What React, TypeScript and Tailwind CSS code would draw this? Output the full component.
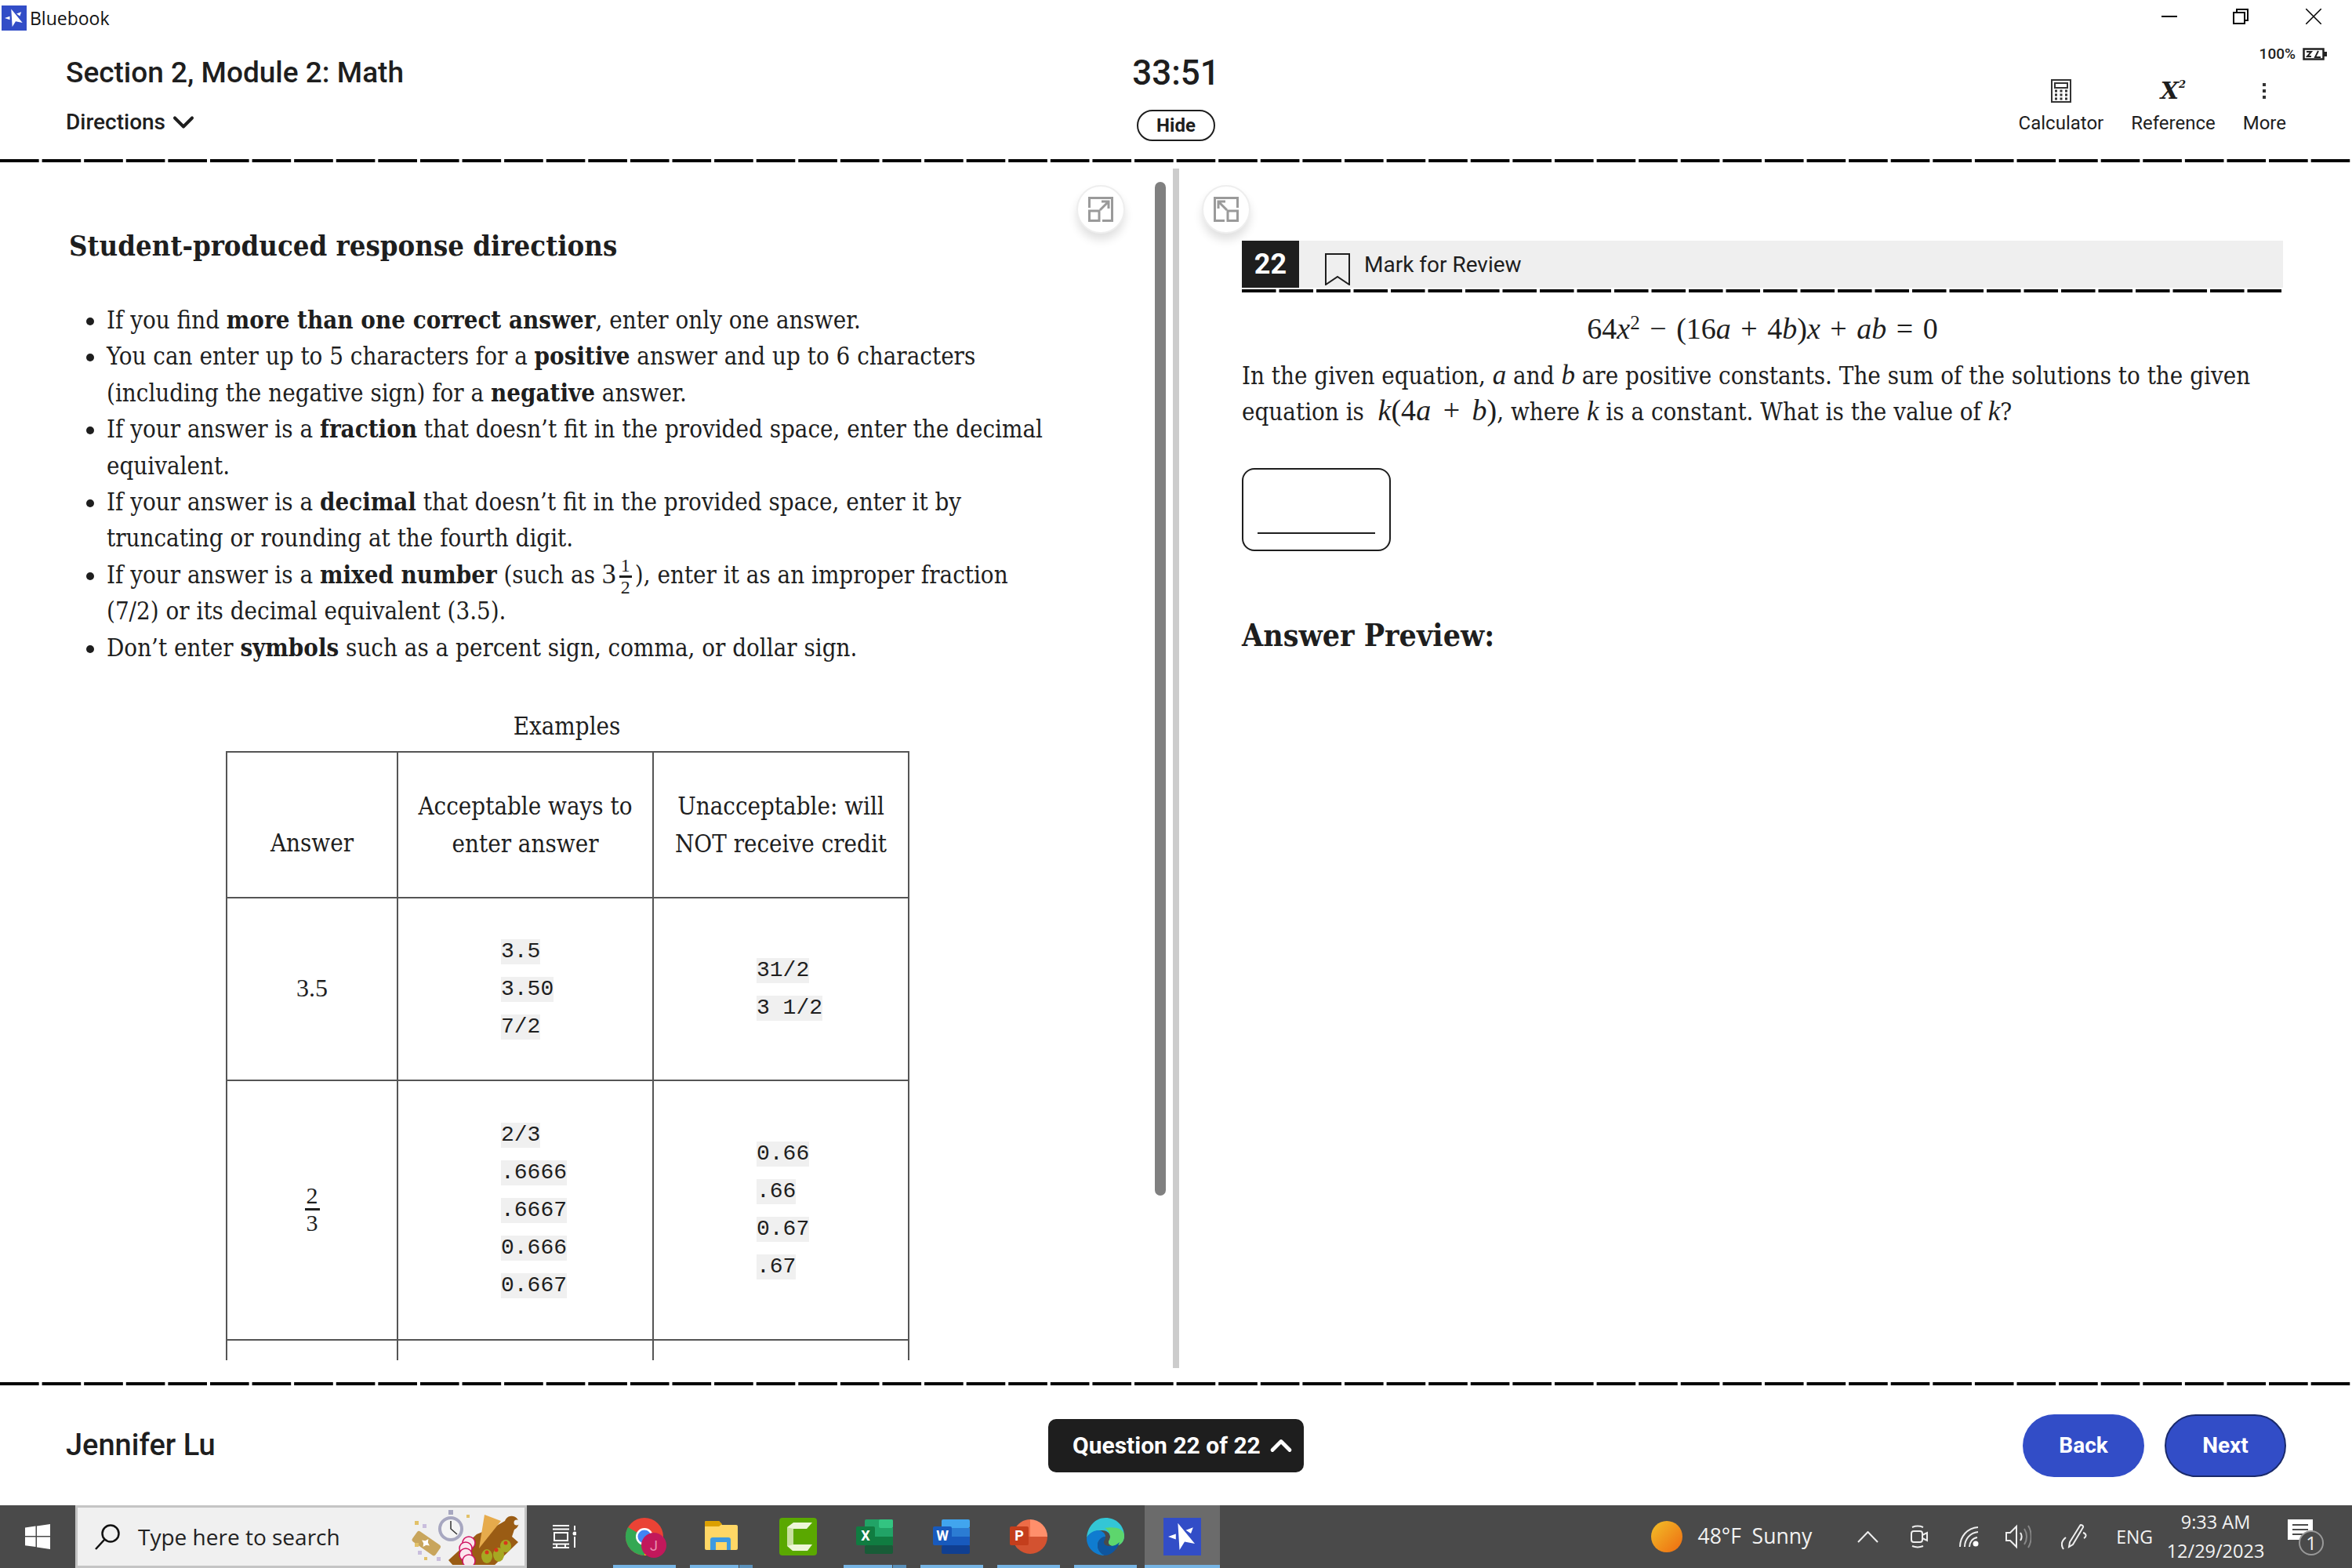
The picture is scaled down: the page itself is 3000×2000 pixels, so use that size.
import { ReactNode } from 'react';
import { ChevronDown, ChevronUp } from 'lucide-react';

const SERIF = "font-['DejaVu_Serif',serif] [font-stretch:condensed]";
const ROBOTO = "font-['Roboto',sans-serif]";
const MATH = "font-['Liberation_Serif',serif]";

// Dashed rule used across the exam layout
function Dashes() {
  return <div className="h-1 w-full shrink-0 bg-[linear-gradient(90deg,#000_50px,transparent_50px)] bg-size-[53.6px_4px]" />;
}

function I({ children }: { children: ReactNode }) {
  return <span className={`${MATH} text-[35px] leading-none italic`}>{children}</span>;
}

function Frac({ top, bottom, size }: { top: string; bottom: string; size: string }) {
  return (
    <span className={`${MATH} ${size} -my-4 mx-1 inline-flex flex-col items-center align-middle leading-none`}>
      <span className="border-b-[3px] border-[#1e1e1e] px-0.5 leading-[1.05]">{top}</span>
      <span className="px-0.5 leading-[1.05]">{bottom}</span>
    </span>
  );
}

function Chip({ children }: { children: string }) {
  return (
    <div className="flex h-12 items-center">
      <code className="bg-[#f0f0f0] font-['Liberation_Mono',monospace] text-[28px] leading-8 whitespace-pre text-[#1e1e1e]">{children}</code>
    </div>
  );
}

function Bluebook({ size }: { size: number }) {
  return (
    <svg width={size} height={size} viewBox="0 0 48 48">
      <rect width="48" height="48" fill="#324dc7" />
      <path d="M18.4 6.7 40 33l-13-2.6L20.5 41Z M6 24l9.8-3.4v6.8Z M37.8 12.3 28.6 15.7l6.4 4.4Z" fill="#fff" />
    </svg>
  );
}

function CutIcon({ flip }: { flip?: boolean }) {
  return (
    <svg width="32" height="32" viewBox="0 0 32 32" fill="none" stroke="#9a9a9a" strokeWidth="3">
      {flip ? (
        <>
          <path d="M14 30.500H1.500V1.500H30.500V14" />
          <rect x="18" y="18" width="12.500" height="12.500" />
          <path d="M17 17 6.500 6.500M6 15V6h9" />
        </>
      ) : (
        <>
          <path d="M1.500 14V1.500H30.500V30.500H18" />
          <rect x="1.500" y="18" width="12.500" height="12.500" />
          <path d="M15 17 25.500 6.500M17 6h9v9" />
        </>
      )}
    </svg>
  );
}

function Doodle() {
  return (
    <svg width="152" height="72" viewBox="-4 0 152 72" className="shrink-0">
      <path d="M87 33l22-9 14-8a9 9 0 1 1 12 11l-3 9 8 7-32 31H58l-7-8Z" fill="#9a5c14" />
      <circle cx="138" cy="18" r="3.500" fill="#f0f0f0" />
      <path d="M97 8l21 8-28 35Z" fill="#e6ab4c" />
      <circle cx="54" cy="26" r="16" fill="#a7a7c0" />
      <circle cx="54" cy="26" r="12" fill="#f4f4f4" />
      <path d="M54 16v10l8 7" stroke="#333" strokeWidth="1.500" fill="none" />
      <rect x="51" y="2" width="6" height="6" fill="#a7a7c0" />
      <g transform="rotate(35 22 44)">
        <rect x="5" y="36" width="36" height="16" rx="3" fill="#c8a55c" />
        <path d="M22 38l2 4 4 2-4 2-2 4-2-4-4-2 4-2Z" fill="#fff" />
      </g>
      <g fill="#fbe6ee" stroke="#cf1160" strokeWidth="1.500">
        <circle cx="77" cy="44" r="8" />
        <circle cx="73" cy="51" r="8" />
        <circle cx="73" cy="59" r="8" />
        <circle cx="77" cy="67" r="8" />
      </g>
      <g fill="#a6a822">
        <ellipse cx="100" cy="61" rx="7" ry="9" />
        <ellipse cx="115" cy="59" rx="7" ry="9" />
        <ellipse cx="124" cy="48" rx="7" ry="8" />
      </g>
      <g fill="#d8361c">
        <circle cx="100" cy="56" r="2.500" />
        <circle cx="112" cy="53" r="2.500" />
        <circle cx="124" cy="44" r="2.500" />
      </g>
      <g fill="#e2c168">
        <rect x="8" y="16" width="5" height="5" />
        <rect x="8" y="44" width="5" height="5" />
        <rect x="20" y="62" width="4" height="4" />
        <rect x="74" y="8" width="4" height="4" />
      </g>
      <g fill="#c9bedd">
        <rect x="18" y="20" width="5" height="5" />
        <rect x="12" y="54" width="5" height="5" />
        <rect x="36" y="62" width="5" height="5" />
      </g>
    </svg>
  );
}

function AppIcon({ name }: { name: string }) {
  if (name === 'chrome')
    return (
      <svg width="62" height="56" viewBox="0 0 62 56">
        <circle cx="31" cy="28" r="24" fill="#ea4335" />
        <path d="M31 28 10 16A24 24 0 0 0 31 52Z" fill="#34a853" />
        <path d="M31 28h24a24 24 0 0 1-24 24Z" fill="#fbbc05" />
        <circle cx="31" cy="28" r="11" fill="#fff" />
        <circle cx="31" cy="28" r="8.500" fill="#4285f4" />
        <circle cx="43" cy="39" r="16" fill="#c2185b" />
        <text x="43" y="46" textAnchor="middle" fontSize="18" fill="#e98fb0" fontFamily="Roboto">J</text>
      </svg>
    );
  if (name === 'folder')
    return (
      <svg width="42" height="48" viewBox="0 0 42 48">
        <path d="M0 6a2 2 0 0 1 2-2h16l4 5h18a2 2 0 0 1 2 2v28a2 2 0 0 1-2 2H2a2 2 0 0 1-2-2Z" fill="#ffd766" />
        <path d="M0 6a2 2 0 0 1 2-2h16l4 4-4 3H0Z" fill="#dca000" />
        <path d="M7 41V28a3 3 0 0 1 3-3h20a3 3 0 0 1 3 3v13h-7V31H14v10Z" fill="#3e9ae0" />
        <rect x="14" y="31" width="14" height="10" fill="#ffd766" />
      </svg>
    );
  if (name === 'camtasia')
    return (
      <svg width="48" height="48" viewBox="0 0 48 48">
        <rect width="48" height="48" rx="4" fill="#5aa800" />
        <path d="M10 12 18 6h24l-7 8H18v20h24l-6 8H17l-7-6Z" fill="#eef6d8" />
        <path d="M10 12l8 2v20l-8 2Z" fill="#c9e0a0" />
      </svg>
    );
  if (name === 'excel' || name === 'word')
    return (
      <svg width="48" height="44" viewBox="0 0 48 44">
        {name === 'excel' ? (
          <>
            <rect x="11" y="0" width="36" height="11" rx="2" fill="#21a366" />
            <rect x="29" y="0" width="18" height="11" rx="2" fill="#33c481" />
            <rect x="11" y="11" width="18" height="11" fill="#21a366" />
            <rect x="29" y="11" width="18" height="11" fill="#21a366" />
            <rect x="11" y="22" width="36" height="11" fill="#107c41" />
            <rect x="11" y="33" width="36" height="11" rx="2" fill="#185c37" />
          </>
        ) : (
          <>
            <rect x="11" y="0" width="36" height="11" rx="2" fill="#41a5ee" />
            <rect x="11" y="11" width="36" height="11" fill="#2b7cd3" />
            <rect x="11" y="22" width="36" height="11" fill="#185abd" />
            <rect x="11" y="33" width="36" height="11" rx="2" fill="#103f91" />
          </>
        )}
        <rect x="0" y="9" width="24" height="24" rx="2" fill={name === 'excel' ? '#107c41' : '#185abd'} />
        <text x="12" y="27" textAnchor="middle" fontSize="18" fontWeight="700" fill="#fff" fontFamily="Roboto">
          {name === 'excel' ? 'X' : 'W'}
        </text>
      </svg>
    );
  if (name === 'ppt')
    return (
      <svg width="48" height="44" viewBox="0 0 48 44">
        <path d="M26 0a22 22 0 0 1 22 22H26Z" fill="#ff8f6b" />
        <path d="M26 0a22 22 0 0 0-16 37l16-15Z" fill="#ed6c47" />
        <path d="M4 22h44a22 22 0 0 1-44 0Z" fill="#d35230" />
        <rect x="0" y="9" width="24" height="24" rx="2" fill="#c43e1c" />
        <text x="12" y="27" textAnchor="middle" fontSize="18" fontWeight="700" fill="#fff" fontFamily="Roboto">P</text>
      </svg>
    );
  return (
    <svg width="48" height="48" viewBox="0 0 48 48">
      <path d="M24 0c14 0 24 10 24 23 0 8-6 13-12 13-5 0-8-2-8-5 0-2 2-3 2-7 0-5-5-8-10-8C10 16 2 20 0 26 1 11 11 0 24 0Z" fill="#33c6d6" />
      <path d="M48 23c0 8-6 13-12 13-5 0-8-2-8-5 0-2 2-3 2-7 0-5-3-9-7-11 12-2 25 0 25 10Z" fill="#5dd66d" />
      <path d="M0 26c2-6 10-10 14-10 5 0 10 3 10 8-5 0-10 5-10 11 0 6 4 11 9 13C10 48 0 38 0 26Z" fill="#0f7cd0" />
      <path d="M14 35c0-6 5-11 10-11 0 4-2 5-2 7 0 3 3 5 8 5 5 0 9-2 12-5-3 10-11 17-19 17-5-2-9-7-9-13Z" fill="#0f569f" />
    </svg>
  );
}

const taskApps = [
  { name: 'chrome', bar: 'single' },
  { name: 'folder', bar: 'stack' },
  { name: 'camtasia', bar: 'none' },
  { name: 'excel', bar: 'stack' },
  { name: 'word', bar: 'single' },
  { name: 'ppt', bar: 'single' },
  { name: 'edge', bar: 'single' },
];

function Taskbar() {
  return (
    <div className="flex h-20 w-full shrink-0 items-stretch bg-[#4a4a4a] font-['Open_Sans',sans-serif] text-[#f2f2f2]">
      <div className="flex w-24 items-center justify-center">
        <svg width="32" height="32" viewBox="0 0 32 32" fill="#fff">
          <path d="M0 4.500 13.500 2.600V15H0ZM15 2.400 32 0V15H15ZM0 16.500H13.500V29L0 27.200ZM15 16.500H32V32L15 29.500Z" />
        </svg>
      </div>
      <div className="flex w-[576px] items-center overflow-hidden border-[3px] border-[#c4c4c4] bg-[#f0f0f0] pl-[21px] text-[#222]">
        <svg width="34" height="34" viewBox="0 0 34 34" fill="none" stroke="#111" strokeWidth="2.500">
          <circle cx="21" cy="13" r="10.500" />
          <path d="M13.500 20.500 2 33" />
        </svg>
        <span className="ml-[22px] text-[28px] leading-none">Type here to search</span>
        <div className="ml-auto flex items-center">
          <Doodle />
        </div>
      </div>
      <div className="flex w-[110px] items-center justify-start pl-8">
        <svg width="31" height="30" viewBox="0 0 31 30" fill="none" stroke="#fff" strokeWidth="2">
          <path d="M1 1h21M1 5.500h21M3 10h17v10H3ZM1 24.500h21M1 29h21M6 24.500V29M17 24.500V29M29 1v6M29 15v14" />
          <circle cx="29" cy="11" r="2.500" fill="#fff" stroke="none" />
        </svg>
      </div>
      <div className="flex gap-[18px]">
        {taskApps.map((app) => (
          <div key={app.name} className="relative flex w-20 items-center justify-center">
            <AppIcon name={app.name} />
            {app.bar !== 'none' && (
              <div className="absolute inset-x-0 bottom-0 flex h-1">
                <div className="flex-1 bg-[#76b4e4]" />
                {app.bar === 'stack' && <div className="ml-px w-[17px] bg-[#5a90ba]" />}
              </div>
            )}
          </div>
        ))}
        <div className="relative -mx-2 flex w-24 items-center justify-center bg-[#6b6b6b]">
          <Bluebook size={48} />
          <div className="absolute inset-x-0 bottom-0 h-1 bg-[#76b4e4]" />
        </div>
      </div>
      <div className="ml-auto flex items-center">
        <div className="h-10 w-10 rounded-full bg-[linear-gradient(135deg,#f2c029,#ee6a10)]" />
        <span className="ml-5 text-[26.5px] whitespace-pre">48°F  Sunny</span>
        <svg width="27" height="15" viewBox="0 0 27 15" fill="none" stroke="#eee" strokeWidth="2" className="ml-[58px]">
          <path d="M1 14 13.500 1 26 14" />
        </svg>
        <svg width="23" height="30" viewBox="0 0 23 30" fill="none" stroke="#eee" strokeWidth="2" className="ml-10">
          <path d="M3 3c5-2 9-2 14 0M3 27c5 2 9 2 14 0" />
          <rect x="2" y="8" width="14" height="14" rx="3" />
          <path d="M16 13l6-3v10l-6-3" />
        </svg>
        <svg width="25" height="26" viewBox="0 0 25 26" fill="none" stroke="#eee" strokeWidth="2" className="ml-10">
          <path d="M1 26C1 13 10 2 24 1M7 26C7 16 14 8 24 7M13 26c0-6 4-11 10-12" />
          <circle cx="21" cy="22" r="3.500" fill="#fff" stroke="none" />
        </svg>
        <svg width="33" height="32" viewBox="0 0 33 32" fill="none" stroke="#eee" strokeWidth="2" className="ml-[34px]">
          <path d="M1 11h5l8-8v26l-8-8H1Z" />
          <path d="M19 11c2 3 2 7 0 10" />
          <path d="M24 6c4 6 4 14 0 20M29 2c5 8 5 20 0 28" stroke="#888" />
        </svg>
        <svg width="33" height="34" viewBox="0 0 33 34" fill="none" stroke="#eee" strokeWidth="2" className="ml-[38px]">
          <path d="M11 24 24 3c1-2 5 0 4 2L15 27l-5 3Z" />
          <path d="M28 12c4 1 5 5 1 7M6 18c-5 4-7 9-3 15" />
        </svg>
        <span className="ml-[37px] text-[23px]">ENG</span>
        <div className="ml-[20px] flex w-[120px] flex-col items-center text-[23.5px] leading-[37px]">
          <span>9:33 AM</span>
          <span>12/29/2023</span>
        </div>
        <div className="relative ml-[32px] mr-[50px] h-[44px] w-[32px]">
          <svg width="32" height="26" viewBox="0 0 32 26" fill="#fff" className="absolute top-0 left-0">
            <path d="M0 0h32v26H0Z" />
            <path d="M6 7h20M6 13h20M6 19h14" stroke="#4a4a4a" strokeWidth="2" />
          </svg>
          <div className="absolute top-[14px] left-[14px] flex h-8 w-8 items-center justify-center rounded-full border-2 border-[#999] bg-[#4a4a4a] text-[24px] leading-none">1</div>
        </div>
      </div>
    </div>
  );
}

function Header() {
  return (
    <div className={`${ROBOTO} grid h-[157px] shrink-0 grid-cols-3 text-[#1e1e1e]`}>
      <div className="pt-6 pl-[84px]">
        <div className="text-[37px] leading-[46px] font-medium">Section 2, Module 2: Math</div>
        <div className="mt-[22px] flex h-9 items-center text-[28px] font-medium">
          Directions
          <ChevronDown size={44} strokeWidth={2.2} className="-my-2 ml-px" />
        </div>
      </div>
      <div className="flex flex-col items-center pt-6">
        <div className="text-[44px] leading-[46px] font-medium">33:51</div>
        <div className="mt-6 flex h-10 w-[100px] items-center justify-center rounded-full border-2 border-[#1e1e1e] text-[24px] font-bold">Hide</div>
      </div>
      <div className="flex flex-col items-end pr-8">
        <div className="mt-[11px] flex h-6 items-center gap-[9px] text-[19px] font-medium">
          100%
          <svg width="31" height="16" viewBox="0 0 31 16" fill="none" stroke="#222" strokeWidth="2.500">
            <rect x="1.500" y="1.500" width="25" height="13" />
            <path d="M27 5h4v6h-4Z" fill="#222" stroke="none" />
            <path d="M5 5h6l-5 6h5M20 4l-4 8h7" strokeWidth="2" />
          </svg>
        </div>
        <div className="mt-[20px] mr-[52px] flex gap-[35px] text-[24px]">
          <div className="flex flex-col items-center">
            <svg width="26" height="30" viewBox="0 0 26 30" fill="none" stroke="#333" strokeWidth="2">
              <rect x="1" y="1" width="24" height="28" />
              <rect x="5" y="5" width="16" height="6" />
              <path d="M5 15h3M11.500 15h3M18 15h3M5 20h3M11.500 20h3M18 20h3M5 25h3M11.500 25h3M18 25h3" strokeWidth="3" />
            </svg>
            <span className="mt-3 leading-7">Calculator</span>
          </div>
          <div className="flex flex-col items-center">
            <div className="flex h-[30px] items-start font-['DejaVu_Serif',serif] text-[30px] leading-[30px] font-bold italic">
              X<span className="text-[13px] leading-[14px]">2</span>
            </div>
            <span className="mt-3 leading-7">Reference</span>
          </div>
          <div className="flex flex-col items-center">
            <div className="flex h-[30px] flex-col items-center justify-center gap-1">
              <div className="h-1 w-1 bg-[#333]" />
              <div className="h-1 w-1 bg-[#333]" />
              <div className="h-1 w-1 bg-[#333]" />
            </div>
            <span className="mt-3 leading-7">More</span>
          </div>
        </div>
      </div>
    </div>
  );
}

function DirectionsPanel() {
  return (
    <div className={`${SERIF} relative h-[1528px] w-[1473px] shrink-0 overflow-hidden pt-[82px] pl-[88px] text-[#1e1e1e]`}>
      <div className="absolute top-[29px] left-[1373px] flex h-[62px] w-[62px] items-center justify-center rounded-full border-2 border-[#eee] bg-white shadow-[0_8px_12px_rgba(0,0,0,0.12)]">
        <CutIcon />
      </div>
      <h2 className="text-[36.2px] leading-[50px] font-bold whitespace-nowrap">Student-produced response directions</h2>
      <ul className="mt-[46px] list-disc pl-[48px] text-[31px] leading-[46.4px] whitespace-nowrap">
        <li>If you find <b>more than one correct answer</b>, enter only one answer.</li>
        <li>You can enter up to 5 characters for a <b>positive</b> answer and up to 6 characters<br />(including the negative sign) for a <b>negative</b> answer.</li>
        <li>If your answer is a <b>fraction</b> that doesn’t fit in the provided space, enter the decimal<br />equivalent.</li>
        <li>If your answer is a <b>decimal</b> that doesn’t fit in the provided space, enter it by<br />truncating or rounding at the fourth digit.</li>
        <li>
          If your answer is a <b>mixed number</b> (such as <span className={`${MATH} text-[36px] leading-none`}>3</span>
          <Frac top="1" bottom="2" size="text-[24px]" />), enter it as an improper fraction<br />(7/2) or its decimal equivalent (3.5).
        </li>
        <li>Don’t enter <b>symbols</b> such as a percent sign, comma, or dollar sign.</li>
      </ul>
      <div className="mt-[54px] ml-[200px] w-[870px] text-center text-[31px] leading-[46px]">Examples</div>
      <table className="mt-[9px] ml-[200px] w-[870px] table-fixed border-collapse border-2 border-[#555] text-center text-[31px] leading-[48px]">
        <colgroup>
          <col className="w-[218px]" />
          <col className="w-[326px]" />
          <col className="w-[326px]" />
        </colgroup>
        <tbody>
          <tr className="h-[186px]">
            <td className="border-2 border-[#555] pt-[46px] align-middle">Answer</td>
            <td className="border-2 border-[#555] align-middle">Acceptable ways to<br />enter answer</td>
            <td className="border-2 border-[#555] align-middle">Unacceptable: will<br />NOT receive credit</td>
          </tr>
          <tr className="h-[233px]">
            <td className={`${MATH} border-2 border-[#555] pb-1 text-[32px]`}>3.5</td>
            <td className="border-2 border-[#555] pl-[131px] text-left">
              <Chip>3.5</Chip><Chip>3.50</Chip><Chip>7/2</Chip>
            </td>
            <td className="border-2 border-[#555] pl-[131px] text-left">
              <Chip>31/2</Chip><Chip>3 1/2</Chip>
            </td>
          </tr>
          <tr className="h-[331px]">
            <td className="border-2 border-[#555] pb-2"><Frac top="2" bottom="3" size="text-[30px]" /></td>
            <td className="border-2 border-[#555] pl-[131px] text-left">
              <Chip>2/3</Chip><Chip>.6666</Chip><Chip>.6667</Chip><Chip>0.666</Chip><Chip>0.667</Chip>
            </td>
            <td className="border-2 border-[#555] pl-[131px] text-left">
              <Chip>0.66</Chip><Chip>.66</Chip><Chip>0.67</Chip><Chip>.67</Chip>
            </td>
          </tr>
          <tr className="h-[100px]">
            <td className="border-2 border-[#555]" />
            <td className="border-2 border-[#555]" />
            <td className="border-2 border-[#555]" />
          </tr>
        </tbody>
      </table>
    </div>
  );
}

function QuestionPanel() {
  return (
    <div className="relative flex-1 pt-[100px] pl-[80px] text-[#1e1e1e]">
      <div className="absolute top-[29px] left-[29px] flex h-[62px] w-[62px] items-center justify-center rounded-full border-2 border-[#eee] bg-white shadow-[0_8px_12px_rgba(0,0,0,0.12)]">
        <CutIcon flip />
      </div>
      <div className="w-[1328px]">
        <div className={`${ROBOTO} flex h-[60px] items-center bg-[#efefef] text-[28px]`}>
          <div className="flex h-full w-[73px] items-center justify-center bg-[#1e1e1e] text-[36px] font-bold text-white">22</div>
          <svg width="32" height="41" viewBox="0 0 32 41" fill="none" stroke="#1e1e1e" strokeWidth="2" className="mt-[13px] ml-[33px]">
            <path d="M1 1h30v39L16 30 1 40Z" />
          </svg>
          <span className="mt-0.5 ml-[18px]">Mark for Review</span>
        </div>
        <div className="mt-0.5 h-1 bg-[linear-gradient(90deg,#000_44px,transparent_44px)] bg-size-[47.5px_4px]" />
        <div className={`${MATH} mt-[23px] h-[46px] text-center text-[38px] leading-[46px] [word-spacing:3px]`}>
          64<i>x</i><sup className="text-[25px] leading-none">2</sup> − (16<i>a</i> + 4<i>b</i>)<i>x</i> + <i>ab</i> = 0
        </div>
        <p className={`${SERIF} mt-[14px] h-[92px] text-[31px] leading-[46px] whitespace-nowrap`}>
          In the given equation, <I>a</I> and <I>b</I> are positive constants. The sum of the solutions to the given<br />
          equation is &nbsp;<span className={`${MATH} text-[38px] leading-none [word-spacing:6px]`}><i>k</i>(4<i>a</i> + <i>b</i>)</span>, where <I>k</I> is a constant. What is the value of <I>k</I>?
        </p>
        <div className="mt-[49px] flex h-[106px] w-[190px] items-end rounded-2xl border-2 border-[#1e1e1e] px-[18px] pb-[20px]">
          <div className="h-0.5 w-full bg-[#1e1e1e]" />
        </div>
        <h3 className={`${SERIF} mt-[82px] text-[39px] leading-[50px] font-bold`}>Answer Preview:</h3>
      </div>
    </div>
  );
}

export default function App() {
  return (
    <div className="flex h-[2000px] w-[3000px] flex-col overflow-hidden bg-white">
      <div className="flex h-[46px] shrink-0 items-center pl-0.5">
        <Bluebook size={32} />
        <span className="ml-1 font-['Open_Sans',sans-serif] text-[23px] text-[#111]">Bluebook</span>
        <div className="ml-auto flex items-center gap-[71px] pr-[39px] pb-1">
          <div className="h-0.5 w-5 bg-black" />
          <svg width="20" height="20" viewBox="0 0 20 20" fill="none" stroke="#000" strokeWidth="2">
            <rect x="1" y="5" width="14" height="14" />
            <path d="M5 5V1h14v14h-4" />
          </svg>
          <svg width="20" height="20" viewBox="0 0 20 20" fill="none" stroke="#000" strokeWidth="1.500" className="ml-0.5">
            <path d="M0 0l20 20M20 0 0 20" />
          </svg>
        </div>
      </div>
      <Header />
      <Dashes />
      <div className="flex h-[1556px] shrink-0">
        <DirectionsPanel />
        <div className="w-[14px] shrink-0">
          <div className="mt-[25px] h-[1293px] rounded-full bg-[#808080]" />
        </div>
        <div className="ml-[9px] mt-2 h-[1530px] w-2 shrink-0 bg-[#ccc]" />
        <QuestionPanel />
      </div>
      <Dashes />
      <div className={`${ROBOTO} grid h-[153px] shrink-0 grid-cols-[1fr_auto_1fr] items-center px-[84px]`}>
        <div className="text-[38px] font-medium text-[#1e1e1e]">Jennifer Lu</div>
        <div className="flex h-[68px] w-[326px] items-center rounded-[10px] bg-[#1e1e1e] pl-[31px] text-[30px] font-bold text-white">
          Question 22 of 22
          <ChevronUp size={44} strokeWidth={2.6} className="ml-1" />
        </div>
        <div className="flex justify-end gap-[26px] text-[28px] font-bold text-white">
          <div className="flex h-20 w-[155px] items-center justify-center rounded-full bg-[#324dc7]">Back</div>
          <div className="flex h-20 w-[155px] items-center justify-center rounded-full border-2 border-[#1a2a6b] bg-[#324dc7]">Next</div>
        </div>
      </div>
      <Taskbar />
    </div>
  );
}
